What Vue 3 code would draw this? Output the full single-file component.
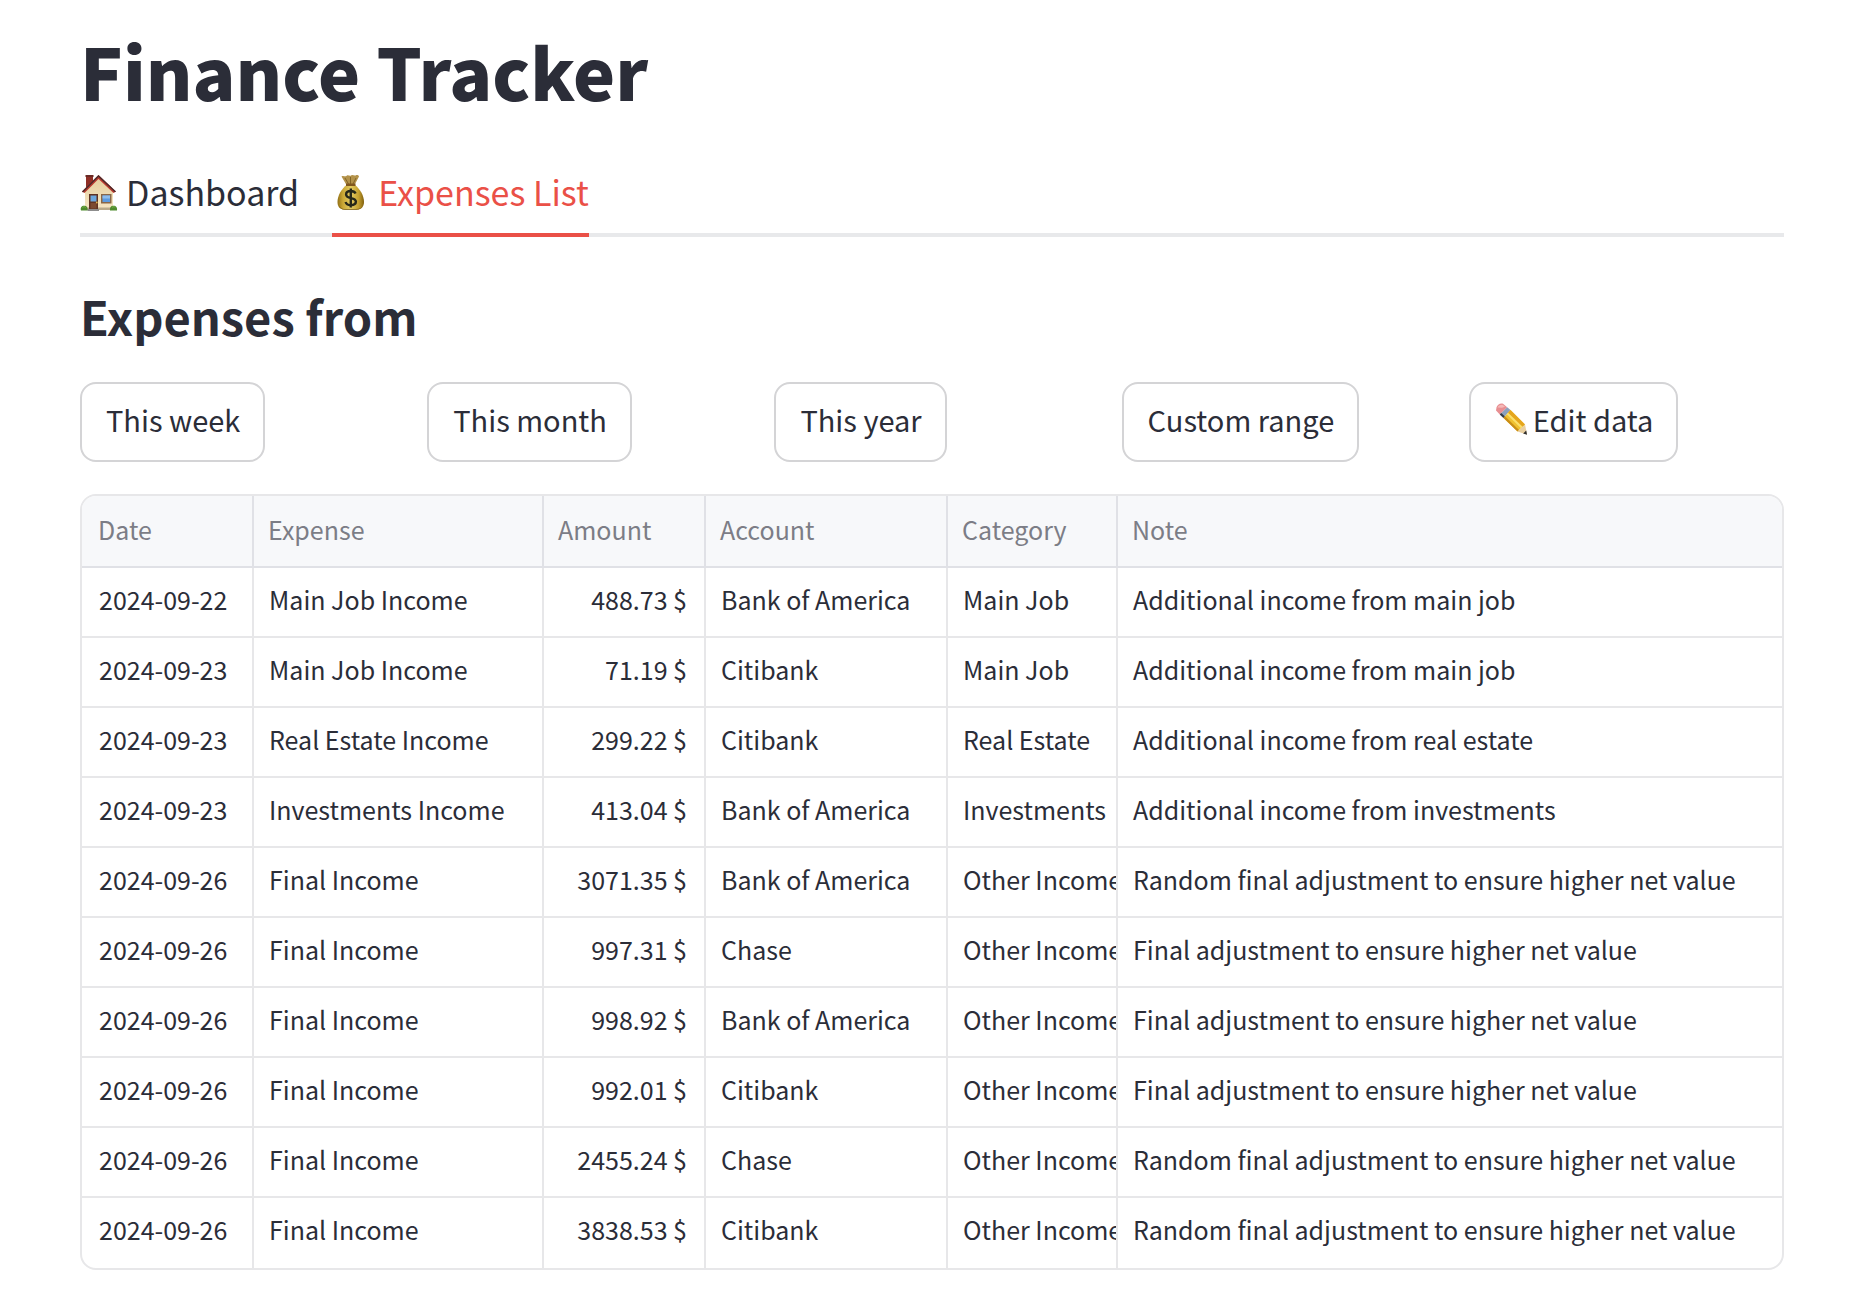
<script setup>
import { ref } from 'vue'

const activeTab = ref('expenses')
const ranges = ['This week', 'This month', 'This year', 'Custom range']

const expenses = [
  ['2024-09-22', 'Main Job Income', '488.73 $', 'Bank of America', 'Main Job', 'Additional income from main job'],
  ['2024-09-23', 'Main Job Income', '71.19 $', 'Citibank', 'Main Job', 'Additional income from main job'],
  ['2024-09-23', 'Real Estate Income', '299.22 $', 'Citibank', 'Real Estate', 'Additional income from real estate'],
  ['2024-09-23', 'Investments Income', '413.04 $', 'Bank of America', 'Investments', 'Additional income from investments'],
  ['2024-09-26', 'Final Income', '3071.35 $', 'Bank of America', 'Other Income', 'Random final adjustment to ensure higher net value'],
  ['2024-09-26', 'Final Income', '997.31 $', 'Chase', 'Other Income', 'Final adjustment to ensure higher net value'],
  ['2024-09-26', 'Final Income', '998.92 $', 'Bank of America', 'Other Income', 'Final adjustment to ensure higher net value'],
  ['2024-09-26', 'Final Income', '992.01 $', 'Citibank', 'Other Income', 'Final adjustment to ensure higher net value'],
  ['2024-09-26', 'Final Income', '2455.24 $', 'Chase', 'Other Income', 'Random final adjustment to ensure higher net value'],
  ['2024-09-26', 'Final Income', '3838.53 $', 'Citibank', 'Other Income', 'Random final adjustment to ensure higher net value'],
]
</script>

<template>
  <main class="page">
    <h1 class="title">Finance Tracker</h1>

    <div class="tabs" role="tablist">
      <button
        class="tab"
        :class="{ active: activeTab === 'dashboard' }"
        type="button"
        role="tab"
        :aria-selected="activeTab === 'dashboard'"
        @click="activeTab = 'dashboard'"
      >
        <svg class="tab-icon" viewBox="0 0 38 38" aria-hidden="true">
          <defs>
            <linearGradient id="wall" x1="0" y1="0" x2="0" y2="1">
              <stop offset="0" stop-color="#e6cf9f" />
              <stop offset="1" stop-color="#f6e6c4" />
            </linearGradient>
          </defs>
          <path d="M6 1h7v9l-7 6z" fill="#8f2f26" />
          <path d="M5.500 1h8v2h-8z" fill="#6a2a25" />
          <path d="M5 18 18.500 5 33 18v17.500H5z" fill="url(#wall)" />
          <path d="M5 33.500h28V36H5z" fill="#b9a98a" />
          <path d="M18.500 1 36 17.500l-2.500 1.500L18.500 5 4.500 19l-2.500-1.500z" fill="#b93a2d" />
          <path d="M18.500 1 36 17.500l-1.200.7L18.500 3 3 18.500l-1-1z" fill="#4c2a2b" />
          <path d="M9 20h9V35.500H9z" fill="#603323" />
          <path d="M10.500 21.500h6v6h-6z" fill="#6ca7dd" />
          <path d="M10.500 29h6v5.500h-6z" fill="#7c4a31" />
          <circle cx="16.800" cy="28.500" r=".9" fill="#e0b54c" />
          <path d="M21 20h10.500v9.500H21z" fill="#8a6747" />
          <path d="M22.500 21.500h7.500v6.500h-7.500z" fill="#5b9ae0" />
          <path d="M22.500 21.500h7.500v3h-7.500z" fill="#8dbcec" />
          <path d="M7.500 35h11.500v2H7.500z" fill="#8d8d8d" />
          <path d="M1 36.500c-1-3 1-5 3.200-4.800C6.500 31.500 8 33.500 7.500 36.500z" fill="#4f8b2e" />
          <path d="M30 36.500c-.5-3 1.200-5 3.500-4.800 2.500 0 4 2 3.500 4.800z" fill="#4f8b2e" />
          <path d="M2.500 33.500c1-1 2.500-1 3.200 0M32 33.500c1-1 2.500-1 3.200 0" fill="none" stroke="#7db54a" />
        </svg>
        <span>Dashboard</span>
      </button>
      <button
        class="tab"
        :class="{ active: activeTab === 'expenses' }"
        type="button"
        role="tab"
        :aria-selected="activeTab === 'expenses'"
        @click="activeTab = 'expenses'"
      >
        <svg class="tab-icon" viewBox="0 0 38 38" aria-hidden="true">
          <defs>
            <linearGradient id="sack" x1="0" y1="0" x2="1" y2="0">
              <stop offset="0" stop-color="#927016" />
              <stop offset=".2" stop-color="#c9a634" />
              <stop offset=".5" stop-color="#e3cb62" />
              <stop offset=".8" stop-color="#c5a02f" />
              <stop offset="1" stop-color="#80600f" />
            </linearGradient>
          </defs>
          <path d="M9.500 2.500c2-1.500 3.500.8 5.200-.8 1.500-1.200 3 .8 4.500-.3 1.500-1 3 .8 4.500 0 1.200-.6 2.800-.2 3.300 1L22.500 11h-8z" fill="#b3924a" />
          <path d="M13 4l3.500 6M18.500 3v7M24 4l-3 6" stroke="#826426" fill="none" />
          <path d="M14.500 11h8.500c5 4 9 10.500 9 17 0 5-3 7.500-7 7.500H12.500c-4.500 0-7-2.500-7-7.500 0-6.500 4-13 9-17z" fill="url(#sack)" />
          <path d="M7 31.500c1.500 3 4 3.500 7 3.500h10c3.500 0 6-1 7-4-1 3.500-3.500 4.800-6.500 4.800H13c-3.500 0-5.500-2-6-4.300z" fill="#76580f" />
          <path d="M14 9.500h9.500v2.500H14z" fill="#80571e" />
          <path d="M23.600 19.500c-.9-1.800-2.600-2.500-4.800-2.500-2.900 0-4.700 1.300-4.700 3.400 0 5 9.800 2.300 9.800 7.200 0 2.200-2.100 3.600-5.100 3.600-2.700 0-4.600-1.100-5.200-3.200M18.800 14.500v19" fill="none" stroke="#262719" stroke-width="2.400" />
        </svg>
        <span>Expenses List</span>
      </button>
    </div>

    <h2 class="subtitle">Expenses from</h2>

    <div class="actions">
      <div v-for="range in ranges" :key="range">
        <button class="action" type="button">{{ range }}</button>
      </div>
      <div>
        <button class="action" type="button">
          <svg class="action-icon" viewBox="0 0 32 32" aria-hidden="true">
            <path d="M1.500 4.500C2 2 5 0 8 .8l4.200 3.400-7.400 7.400L1 7.500z" fill="#e88f92" />
            <path d="M2.500 4.500C3.500 2.500 5.500 1.500 8 2l2 1.800-3 1z" fill="#f5b9b8" />
            <path d="M12.200 4.200 15.500 7l-7 8-3.700-3.400z" fill="#8a9fbd" />
            <path d="M6.200 10 10 13.500l-1.500 1.500-3.700-3.400z" fill="#343b48" />
            <path d="M15.500 7 30 21.500 22.500 28.500 8.500 15z" fill="#f0c12f" />
            <path d="M15.500 7 30 21.500 27.500 23.800 13 9.800z" fill="#e5a51c" />
            <path d="M13 9.800 27.500 23.800 26 25.200 11.700 11.300z" fill="#fbdf6a" />
            <path d="M10 13.300 24 27 22.500 28.500 8.500 15z" fill="#c98d17" />
            <path d="M30 21.500 32 31.500 22.500 28.500z" fill="#e9cf9f" />
            <path d="M31.200 27.500 32 31.800 28.200 30.500z" fill="#2d2d2d" />
          </svg>
          <span>Edit data</span>
        </button>
      </div>
    </div>

    <div class="table-frame">
      <table class="expenses">
        <colgroup>
          <col class="col-date" />
          <col class="col-expense" />
          <col class="col-amount" />
          <col class="col-account" />
          <col class="col-category" />
          <col />
        </colgroup>
        <thead>
          <tr>
            <th scope="col">Date</th>
            <th scope="col">Expense</th>
            <th scope="col">Amount</th>
            <th scope="col">Account</th>
            <th scope="col">Category</th>
            <th scope="col">Note</th>
          </tr>
        </thead>
        <tbody>
          <tr v-for="(row, i) in expenses" :key="i">
            <td v-for="(cell, j) in row" :key="j" :class="{ amount: j === 2 }">{{ cell }}</td>
          </tr>
        </tbody>
      </table>
    </div>
  </main>
</template>

<style>
body {
  margin: 0;
  background: #ffffff;
}
</style>

<style scoped>
.page {
  padding: 25px 70px 34px 80px;
  color: #2b2d38;
  font-family: "Noto Sans CJK SC", "Noto Sans", sans-serif;
}

.title {
  margin: 0;
  font-size: 71px;
  font-weight: 900;
  line-height: 90px;
}

.tabs {
  display: flex;
  gap: 33px;
  margin-top: 53px;
  box-shadow: inset 0 -4px #e8e9eb;
}

.tab {
  display: flex;
  align-items: center;
  gap: 8px;
  padding: 0 0 17px;
  border: 0;
  border-bottom: 4px solid transparent;
  background: none;
  color: inherit;
  font: inherit;
  font-size: 34px;
  line-height: 48px;
  cursor: pointer;
}

.tab.active {
  border-bottom-color: #ea5047;
  color: #ea5047;
}

.tab-icon {
  width: 38px;
  height: 38px;
  margin-top: 2px;
}

.subtitle {
  margin: 51px 0 38px;
  font-size: 47px;
  font-weight: 700;
  line-height: 56px;
}

.actions {
  display: grid;
  grid-template-columns: repeat(5, 1fr);
  gap: 32px;
}

.action {
  display: flex;
  align-items: center;
  gap: 6px;
  padding: 17px 23px 23px 24px;
  border: 2px solid #d4d4d6;
  border-radius: 16px;
  background: #ffffff;
  color: inherit;
  font: inherit;
  font-size: 29px;
  line-height: 36px;
  white-space: nowrap;
  cursor: pointer;
}

.action-icon {
  width: 32px;
  height: 32px;
}

.table-frame {
  margin-top: 32px;
  overflow: hidden;
  border: 2px solid #e7e7e9;
  border-radius: 16px;
}

.expenses {
  width: 100%;
  table-layout: fixed;
  border-collapse: separate;
  border-spacing: 0;
  font-size: 25px;
  line-height: 32px;
}

.col-date {
  width: 172px;
}

.col-expense {
  width: 290px;
}

.col-amount {
  width: 162px;
}

.col-account {
  width: 242px;
}

.col-category {
  width: 170px;
}

th,
td {
  box-sizing: border-box;
  overflow: hidden;
  border-right: 2px solid #e7e7e9;
  border-bottom: 2px solid #e7e7e9;
  text-align: left;
  white-space: nowrap;
}

th {
  height: 72px;
  padding: 17px 0 21px 14px;
  border-color: #e0e1e6;
  background: #f7f8fa;
  color: #7c7d86;
  font-weight: 400;
}

td {
  height: 70px;
  padding: 15px 0 21px 15px;
}

th:first-child {
  padding-left: 16px;
}

td:first-child {
  padding-left: 17px;
}

th:last-child,
td:last-child {
  border-right: 0;
}

tbody tr:last-child td {
  border-bottom: 0;
  padding-bottom: 23px;
}

td.amount {
  padding-right: 17px;
  text-align: right;
}
</style>
